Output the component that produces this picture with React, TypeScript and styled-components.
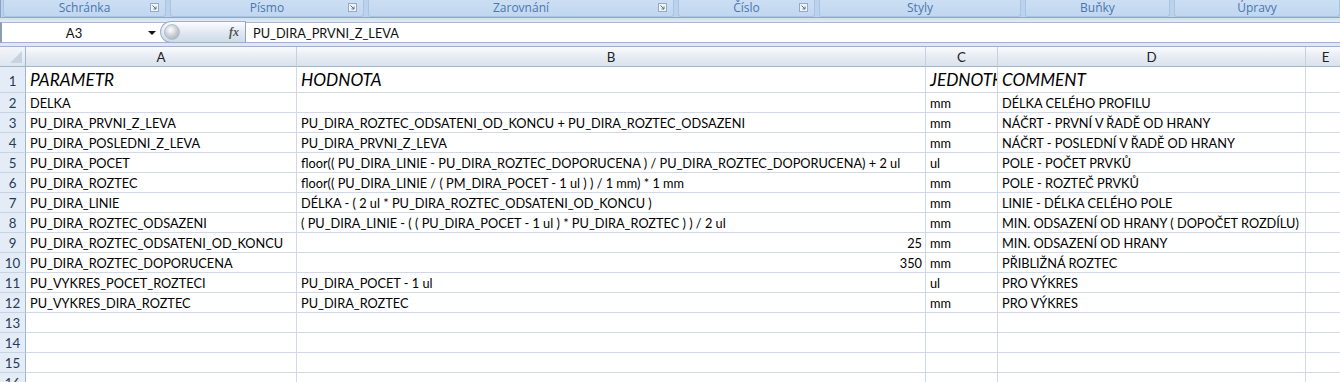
import React from 'react';
import styled, { createGlobalStyle } from 'styled-components';

const GlobalStyle = createGlobalStyle`
  html, body {
    margin: 0;
    padding: 0;
    background: #ffffff;
    overflow: hidden;
  }
  body {
    font-family: Lato, "Liberation Sans", sans-serif;
  }
`;

const groups = [
  { label: 'Schránka', width: 163, launcher: true },
  { label: 'Písmo', width: 194, launcher: true },
  { label: 'Zarovnání', width: 306, launcher: true },
  { label: 'Číslo', width: 137, launcher: true },
  { label: 'Styly', width: 202, launcher: false },
  { label: 'Buňky', width: 145, launcher: false },
  { label: 'Úpravy', width: 0, launcher: false },
];

const columns = ['A', 'B', 'C', 'D', 'E'];

type Row = { a?: string; b?: string; bNum?: boolean; c?: string; d?: string };

const rows: Row[] = [
  { a: 'PARAMETR', b: 'HODNOTA', c: 'JEDNOTKA', d: 'COMMENT' },
  { a: 'DELKA', c: 'mm', d: 'DÉLKA CELÉHO PROFILU' },
  { a: 'PU_DIRA_PRVNI_Z_LEVA', b: 'PU_DIRA_ROZTEC_ODSATENI_OD_KONCU + PU_DIRA_ROZTEC_ODSAZENI', c: 'mm', d: 'NÁČRT - PRVNÍ V ŘADĚ OD HRANY' },
  { a: 'PU_DIRA_POSLEDNI_Z_LEVA', b: 'PU_DIRA_PRVNI_Z_LEVA', c: 'mm', d: 'NÁČRT - POSLEDNÍ V ŘADĚ OD HRANY' },
  { a: 'PU_DIRA_POCET', b: 'floor(( PU_DIRA_LINIE - PU_DIRA_ROZTEC_DOPORUCENA ) / PU_DIRA_ROZTEC_DOPORUCENA) + 2 ul', c: 'ul', d: 'POLE - POČET PRVKŮ' },
  { a: 'PU_DIRA_ROZTEC', b: 'floor(( PU_DIRA_LINIE / ( PM_DIRA_POCET - 1 ul ) ) / 1 mm) * 1 mm', c: 'mm', d: 'POLE - ROZTEČ PRVKŮ' },
  { a: 'PU_DIRA_LINIE', b: 'DÉLKA - ( 2 ul * PU_DIRA_ROZTEC_ODSATENI_OD_KONCU )', c: 'mm', d: 'LINIE - DÉLKA CELÉHO POLE' },
  { a: 'PU_DIRA_ROZTEC_ODSAZENI', b: '( PU_DIRA_LINIE - ( ( PU_DIRA_POCET - 1 ul ) * PU_DIRA_ROZTEC ) ) / 2 ul', c: 'mm', d: 'MIN. ODSAZENÍ OD HRANY ( DOPOČET ROZDÍLU)' },
  { a: 'PU_DIRA_ROZTEC_ODSATENI_OD_KONCU', b: '25', bNum: true, c: 'mm', d: 'MIN. ODSAZENÍ OD HRANY' },
  { a: 'PU_DIRA_ROZTEC_DOPORUCENA', b: '350', bNum: true, c: 'mm', d: 'PŘIBLIŽNÁ ROZTEC' },
  { a: 'PU_VYKRES_POCET_ROZTECI', b: 'PU_DIRA_POCET - 1 ul', c: 'ul', d: 'PRO VÝKRES' },
  { a: 'PU_VYKRES_DIRA_ROZTEC', b: 'PU_DIRA_ROZTEC', c: 'mm', d: 'PRO VÝKRES' },
  {}, {}, {}, {},
];

const App: React.FC = () => {
  return (
    <>
      <GlobalStyle />
      <Window>
        <Ribbon>
          {groups.map((g) => (
            <GroupLabel key={g.label} width={g.width}>
              <span>{g.label}</span>
              {g.launcher && (
                <Launcher>
                  <svg width="9" height="9" viewBox="0 0 9 9">
                    <rect x="0.5" y="0.5" width="8" height="8" fill="#eef3f9" stroke="#94a9c3" />
                    <path d="M2.5 2.5 L6 6 M6 3.5 V6 H3.5" stroke="#5a6f8c" strokeWidth="1" fill="none" />
                  </svg>
                </Launcher>
              )}
            </GroupLabel>
          ))}
        </Ribbon>
        <RibbonShadow />
        <FormulaBar>
          <NameBox>
            <span>A3</span>
            <DropArrow />
          </NameBox>
          <FxPill>
            <Knob />
            <FxLabel>fx</FxLabel>
          </FxPill>
          <FormulaInput>PU_DIRA_PRVNI_Z_LEVA</FormulaInput>
        </FormulaBar>
        <BarGap />
        <Sheet>
          <Corner>
            <svg width="12" height="12" viewBox="0 0 12 12">
              <path d="M12 0 V12 H0 Z" fill="#c8d3e2" />
            </svg>
          </Corner>
          {columns.map((c) => (
            <ColHeader key={c}>{c}</ColHeader>
          ))}
          {rows.map((r, i) => {
            const title = i === 0;
            return (
              <React.Fragment key={i}>
                <RowHeader tall={title}>{i + 1}</RowHeader>
                <Cell heading={title}>{r.a}</Cell>
                <Cell heading={title} numeric={r.bNum}>{r.b}</Cell>
                <Cell heading={title}>{r.c}</Cell>
                <Cell heading={title}>{r.d}</Cell>
                <Cell heading={title} />
              </React.Fragment>
            );
          })}
        </Sheet>
      </Window>
    </>
  );
};

export default App;

const Window = styled.div`
  width: 1340px;
  height: 382px;
  overflow: hidden;
  background: #ffffff;
`;

const Ribbon = styled.div`
  display: flex;
  height: 17px;
  background: #bcd2ec;
  padding-left: 2px;
  gap: 4px;
  border-left: 1px solid #8aa3c2;
  box-sizing: border-box;
`;

const GroupLabel = styled.div<{ width: number }>`
  position: relative;
  flex: ${(p) => (p.width ? `0 0 ${p.width}px` : '1')};
  height: 17px;
  background: linear-gradient(#cbdef3, #c1d7f0);
  border: 1px solid #a9c3e2;
  border-top: none;
  border-radius: 0 0 3px 3px;
  display: flex;
  align-items: center;
  justify-content: center;
  font-family: "Open Sans", "Noto Sans", sans-serif;
  font-size: 12px;
  color: #4a76b0;
  box-sizing: border-box;
  span {
    margin-top: -2px;
  }
`;

const Launcher = styled.div`
  position: absolute;
  right: 6px;
  top: 3px;
  width: 9px;
  height: 9px;
  display: flex;
`;

const RibbonShadow = styled.div`
  height: 5px;
  border-top: 1px solid #90a8c6;
  background: linear-gradient(#d4e0ee, #e3ebf5);
  box-sizing: border-box;
`;

const FormulaBar = styled.div`
  display: flex;
  height: 21px;
  background: #ffffff;
  border-top: 1px solid #a7b9cf;
  border-bottom: 1px solid #9fb3ca;
  border-left: 2px solid #8f9db0;
  box-sizing: border-box;
`;

const NameBox = styled.div`
  position: relative;
  flex: 0 0 158px;
  display: flex;
  align-items: center;
  justify-content: center;
  font-size: 13px;
  color: #111;
  padding-right: 14px;
  box-sizing: border-box;
`;

const DropArrow = styled.div`
  position: absolute;
  right: 4px;
  top: 8px;
  width: 0;
  height: 0;
  border-left: 4px solid transparent;
  border-right: 4px solid transparent;
  border-top: 4px solid #111;
`;

const FxPill = styled.div`
  flex: 0 0 86px;
  margin-top: -2px;
  height: 22px;
  align-self: flex-start;
  border: 1px solid #9db0c7;
  border-right: 1px solid #8ea3bd;
  border-radius: 12px 0 0 12px;
  background: linear-gradient(#fbfcfe, #dde6f1 60%, #cfdbea);
  display: flex;
  align-items: center;
  justify-content: space-between;
  padding: 0 6px 0 3px;
  box-sizing: border-box;
`;

const Knob = styled.div`
  width: 14px;
  height: 14px;
  border-radius: 50%;
  background: radial-gradient(circle at 40% 35%, #ffffff, #c3c9d1 55%, #98a2ae);
  border: 1px solid #b5bec9;
`;

const FxLabel = styled.span`
  font-family: "Liberation Serif", serif;
  font-style: italic;
  font-weight: bold;
  font-size: 12px;
  color: #555;
`;

const FormulaInput = styled.div`
  flex: 1;
  display: flex;
  align-items: center;
  padding-left: 7px;
  font-size: 12.75px;
  color: #111;
`;

const BarGap = styled.div`
  height: 4px;
  background: #dfe7f1;
  border-bottom: 1px solid #9eb1c8;
  box-sizing: border-box;
`;

const Sheet = styled.div`
  display: grid;
  grid-template-columns: 26px 271px 629px 72px 308px 40px;
  grid-template-rows: 20px 26px;
  grid-auto-rows: 20px;
`;

const Corner = styled.div`
  background: linear-gradient(#f3f6fa, #dde5ef);
  border-right: 1px solid #9eb6ce;
  border-bottom: 1px solid #9eb6ce;
  display: flex;
  align-items: flex-end;
  justify-content: flex-end;
  padding: 0 3px 3px 0;
  box-sizing: border-box;
`;

const ColHeader = styled.div`
  background: linear-gradient(#f9fbfd, #e4eaf2 60%, #dae2ec);
  border-right: 1px solid #c5d1e0;
  border-bottom: 1px solid #9eb6ce;
  display: flex;
  align-items: center;
  justify-content: center;
  font-size: 13.3px;
  color: #222;
  box-sizing: border-box;
`;

const RowHeader = styled.div<{ tall?: boolean }>`
  background: #e4ecf7;
  border-right: 1px solid #9eb6ce;
  border-bottom: 1px solid #c5d3e4;
  display: flex;
  align-items: ${(p) => (p.tall ? 'flex-end' : 'center')};
  justify-content: center;
  padding-bottom: ${(p) => (p.tall ? '3px' : '0')};
  font-size: 13.3px;
  color: #273a55;
  box-sizing: border-box;
`;

const Cell = styled.div<{ heading?: boolean; numeric?: boolean }>`
  border-right: 1px solid #d0d7e5;
  border-bottom: 1px solid #d0d7e5;
  display: flex;
  align-items: center;
  justify-content: ${(p) => (p.numeric ? 'flex-end' : 'flex-start')};
  padding: 0 3px 0 4px;
  overflow: hidden;
  white-space: nowrap;
  font-size: ${(p) => (p.heading ? '17.2px' : '12.75px')};
  font-style: ${(p) => (p.heading ? 'italic' : 'normal')};
  color: #000;
  box-sizing: border-box;
`;
